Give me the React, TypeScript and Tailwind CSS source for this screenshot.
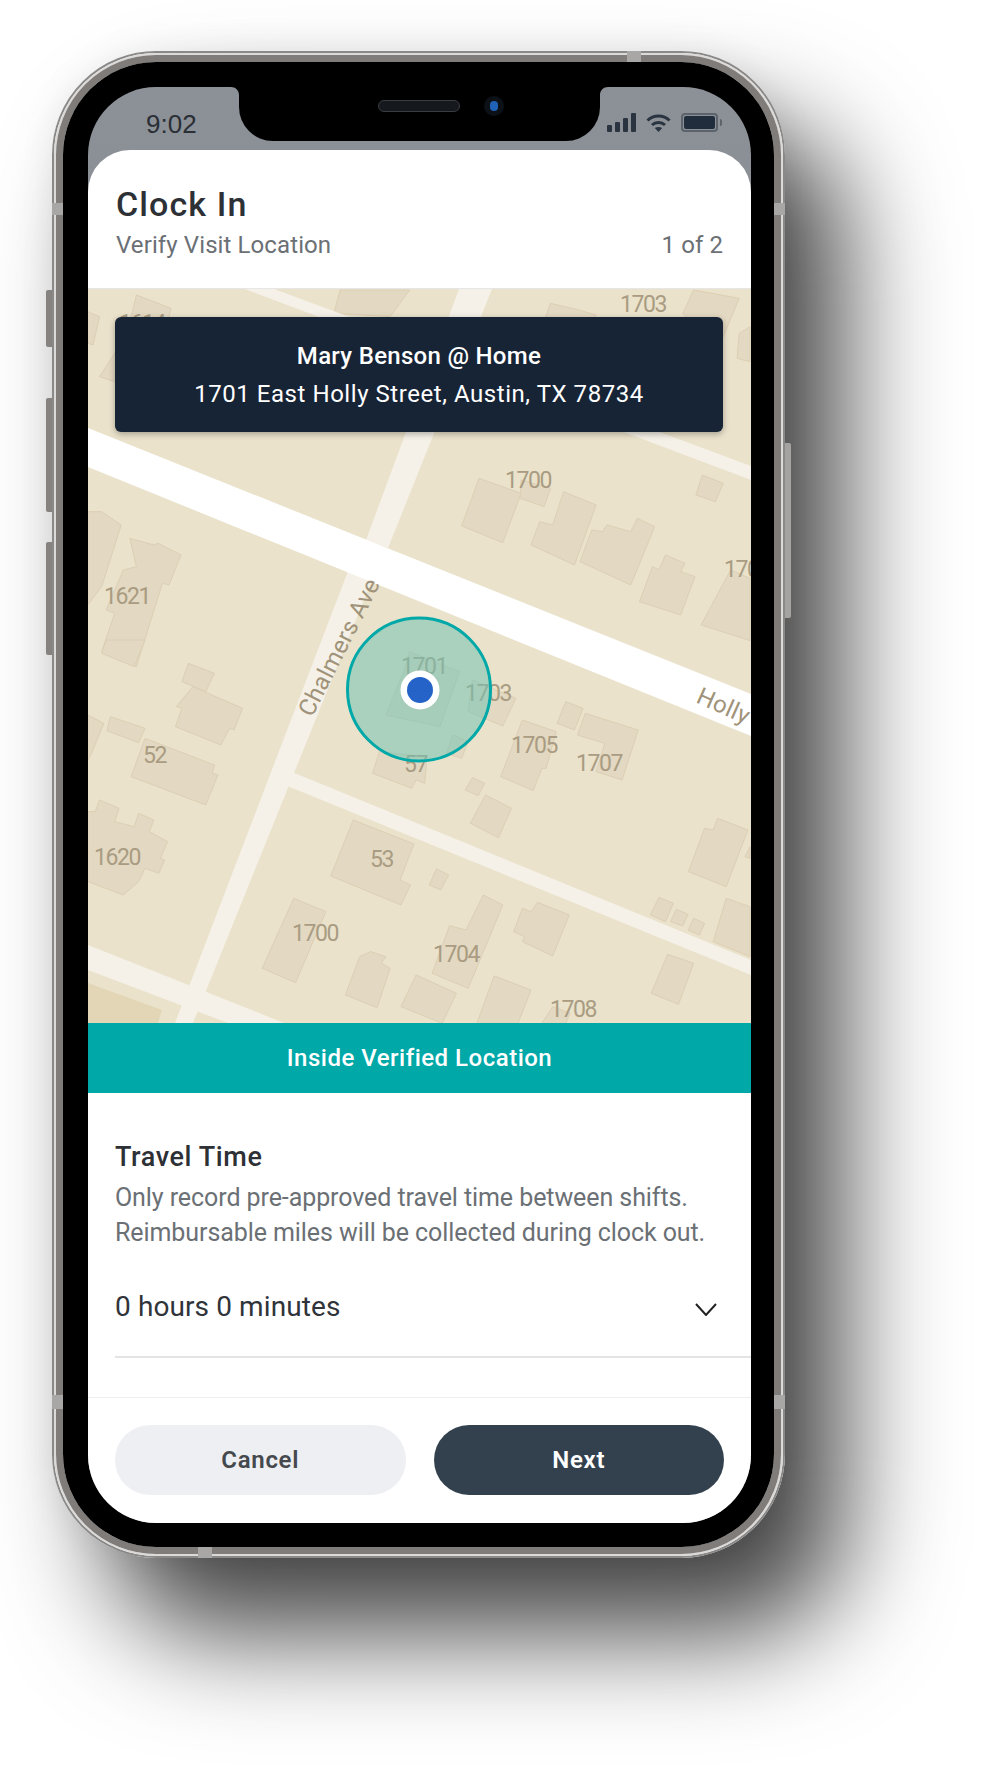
const upperBuildings = [
  "18,95 45,110 30,195 18,190",
  "130,45 210,85 160,340 45,290 100,180 120,100",
  "600,30 760,30 715,110 585,100",
  "1085,70 1150,90 1190,105 1160,200 1060,160",
  "1415,30 1520,55 1483,170 1420,150 1390,100",
  "1520,160 1545,140 1545,245 1515,235",
  "920,595 1017,640 975,788 880,738",
  "1017,600 1085,625 1070,680 1015,655",
  "1115,635 1190,675 1140,855 1040,795 1060,725 1090,735",
  "1215,735 1270,755 1285,715 1325,740 1270,915 1153,845 1180,750 1205,755",
  "1350,825 1395,850 1385,875 1418,890 1385,1005 1290,965 1320,860 1335,870",
  "1500,870 1545,895 1545,1082 1432,1035",
  "1435,585 1483,610 1465,665 1420,645",
  "18,695 50,695 95,735 50,920 18,975",
  "115,775 170,795 180,790 233,825 205,915 190,910 130,1160 50,1115 80,1000 60,990 100,870 130,860",
];

const lowerBuildings = [
  "60,0 150,0 125,80 50,40",
  "250,70 310,100 290,155 235,125",
  "260,140 375,205 355,270 345,265 325,315 220,260 235,205 222,200",
  "70,230 150,265 135,308 62,272",
  "18,225 55,250 25,345 18,360",
  "150,295 310,375 305,400 318,405 290,495 118,410",
  "45,480 90,505 80,545 125,560 135,520 170,540 160,575 202,605 185,655 195,660 182,700 150,685 135,725 100,765 18,725 18,515 35,515",
  "630,540 770,612 738,720 762,735 740,795 578,708",
  "822,687 850,705 832,750 805,735",
  "493,775 567,815 497,1028 420,985",
  "645,950 670,935 705,950 695,970 715,985 685,1103 612,1065",
  "930,765 975,795 895,1045 812,1000 852,857 890,870",
  "1055,787 1128,825 1090,948 1020,905 1025,890 1000,875 1020,805 1040,815",
  "775,1005 868,1060 835,1150 740,1100",
  "955,1008 1040,1050 1010,1150 915,1150",
  "1090,1100 1130,1120 1120,1150 1065,1150",
  "1355,943 1415,970 1380,1093 1317,1060",
  "1470,535 1540,570 1490,740 1403,695 1440,565 1460,570",
  "1545,620 1545,655 1533,650",
  "1490,775 1545,800 1545,950 1460,905",
  "1335,772 1368,790 1350,845 1315,825",
  "1375,808 1402,823 1390,858 1362,845",
  "1415,835 1440,850 1428,885 1402,870",
  "1020,240 1098,275 1075,385 1065,385 1045,452 970,410",
  "1120,185 1160,205 1140,270 1100,250",
  "1165,220 1287,270 1250,420 1190,395 1210,310 1147,285",
  "905,413 933,430 918,467 888,450",
  "935,465 995,505 965,593 900,550",
  "690,335 800,350 795,430 775,420 765,445 675,400",
  "905,120 1005,175 975,258 895,215",
  "760,35 875,95 830,260 705,225 745,100",
  "860,285 895,305 880,355 845,340",
];

const roads = [
  "245,289 274,289 751,466 751,480",
  "292,772 751,960 751,975 285,785",
  "88,945 284,1023 228,1023 88,970",
  "459,289 492,289 388,548 366,540",
  "350,566 372,580 193,1023 175,1023",
];

const labels = [
  { text: "1614", x: 119, y: 331 },
  { text: "1703", x: 620, y: 312 },
  { text: "1700", x: 505, y: 488 },
  { text: "170", x: 724, y: 577 },
  { text: "1621", x: 104, y: 604 },
  { text: "1701", x: 401, y: 674 },
  { text: "1703", x: 465, y: 701 },
  { text: "1705", x: 511, y: 753 },
  { text: "52", x: 143, y: 763 },
  { text: "1707", x: 576, y: 771 },
  { text: "57", x: 404, y: 772 },
  { text: "1620", x: 94, y: 865 },
  { text: "53", x: 370, y: 867 },
  { text: "1700", x: 292, y: 941 },
  { text: "1704", x: 433, y: 962 },
  { text: "1708", x: 550, y: 1017 },
];

function MapView() {
  return (
    <svg viewBox="88 289 663 734" className="block h-[734px] w-full bg-[#eae2cb]">
      <polygon points="88,983 162,1010 158,1023 88,1023" fill="#e2d6b6" />
      <g transform="translate(80 280) scale(0.4337 0.3333)" fill="#e3d8c1" stroke="#dccfb5">
        {upperBuildings.map((p) => (
          <polygon key={p} points={p} vectorEffect="non-scaling-stroke" />
        ))}
      </g>
      <g transform="translate(80 640) scale(0.4337 0.3333)" fill="#e3d8c1" stroke="#dccfb5">
        {lowerBuildings.map((p) => (
          <polygon key={p} points={p} vectorEffect="non-scaling-stroke" />
        ))}
      </g>
      {roads.map((p) => (
        <polygon key={p} points={p} fill="#f5f1e8" />
      ))}
      <polygon points="88,428 751,694 751,736 88,467" fill="#ffffff" />
      <g fontFamily="Roboto, sans-serif" fontSize="23" fill="#a99c82" letterSpacing="-1.4">
        {labels.map((l) => (
          <text key={l.x + l.text} x={l.x} y={l.y}>
            {l.text}
          </text>
        ))}
      </g>
      <g fontFamily="Roboto, sans-serif" fontSize="24" fill="#a0937a" letterSpacing="0.3">
        <text transform="translate(312 718) rotate(-63)">Chalmers Ave</text>
        <text transform="translate(695 702) rotate(24)">Holly</text>
      </g>
      <circle cx="419" cy="689.5" r="71.5" fill="#75c3b5" fillOpacity="0.55" stroke="#00a8a8" strokeWidth="3" />
      <circle cx="420" cy="690" r="19.5" fill="#ffffff" />
      <circle cx="420" cy="690" r="13" fill="#2563c8" />
    </svg>
  );
}

function StatusIcons() {
  return (
    <div className="flex items-center gap-[10px]">
      <div className="flex h-[19px] items-end gap-[3px]">
        <div className="h-[7px] w-[5px] rounded-[1px] bg-[#2a3440]" />
        <div className="h-[10px] w-[5px] rounded-[1px] bg-[#2a3440]" />
        <div className="h-[14px] w-[5px] rounded-[1px] bg-[#2a3440]" />
        <div className="h-[19px] w-[5px] rounded-[1px] bg-[#2a3440]" />
      </div>
      <svg width="25" height="19" viewBox="0 0 25 19" fill="none" stroke="#2a3440" strokeWidth="3">
        <path d="M1.5 7.5C7.5 1.5 17.5 1.5 23.5 7.5" />
        <path d="M6 12C9.5 8.7 15.5 8.7 19 12" />
        <path d="M12.5 19L8.8 15C11 13.6 14 13.6 16.2 15Z" fill="#2a3440" stroke="none" />
      </svg>
      <div className="flex items-center gap-[2px]">
        <div className="flex h-[19px] w-[37px] items-center justify-center rounded-[4px] border-2 border-[#5c636b]">
          <div className="h-[13px] w-[31px] rounded-[2px] bg-[#1f2d3d]" />
        </div>
        <div className="h-[7px] w-[2px] rounded-r-sm bg-[#5c636b]" />
      </div>
    </div>
  );
}

function Notch() {
  return (
    <div className="absolute top-0 left-[151px] h-[54px] w-[361px] rounded-b-[34px] bg-black">
      <svg width="8" height="8" viewBox="0 0 8 8" className="absolute top-0 -left-[8px]">
        <path d="M0 0H8V8C8 3.5 4.5 0 0 0Z" fill="#000000" />
      </svg>
      <svg width="8" height="8" viewBox="0 0 8 8" className="absolute top-0 -right-[8px]">
        <path d="M8 0H0V8C0 3.5 3.5 0 8 0Z" fill="#000000" />
      </svg>
      <div className="absolute top-[13px] left-[139px] h-[12px] w-[82px] rounded-full border border-[#3a3d42] bg-[#15181c]" />
      <div className="absolute top-[9px] left-[245px] flex h-[20px] w-[20px] items-center justify-center rounded-full bg-[#0c1118]">
        <div className="h-[10px] w-[8px] rounded-full bg-[#1f62b8]" />
      </div>
    </div>
  );
}

export default function App() {
  return (
    <div className="min-h-[1790px] overflow-hidden bg-white pt-[51px] pl-[52px] font-[Roboto,sans-serif]">
      <div className="relative h-[1507px] w-[733px] rounded-[104px] border-2 border-[#8b8987] shadow-[58px_76px_110px_rgba(0,0,0,0.73),0_0_36px_rgba(0,0,0,0.07)]">
        {/* side buttons */}
        <div className="absolute top-[237px] -left-[8px] h-[57px] w-[6px] rounded-l-[2px] bg-[#85827f]" />
        <div className="absolute top-[345px] -left-[8px] h-[114px] w-[6px] rounded-l-[2px] bg-[#85827f]" />
        <div className="absolute top-[489px] -left-[8px] h-[113px] w-[6px] rounded-l-[2px] bg-[#85827f]" />
        <div className="absolute top-[390px] -right-[8px] h-[175px] w-[6px] rounded-r-[2px] bg-[#a5a3a1]" />

        {/* antenna bands */}
        <div className="absolute -top-[2px] left-[573px] z-10 h-[11px] w-[14px] bg-[#a9a7a5]" />
        <div className="absolute -bottom-[2px] left-[144px] z-10 h-[11px] w-[14px] bg-[#a9a7a5]" />
        <div className="absolute top-[150px] -left-[2px] z-10 h-[12px] w-[11px] bg-[#a9a7a5]" />
        <div className="absolute top-[150px] -right-[2px] z-10 h-[12px] w-[11px] bg-[#a9a7a5]" />
        <div className="absolute top-[1342px] -left-[2px] z-10 h-[14px] w-[11px] bg-[#a9a7a5]" />
        <div className="absolute top-[1342px] -right-[2px] z-10 h-[14px] w-[11px] bg-[#a9a7a5]" />

        <div className="h-full rounded-[102px] border-2 border-[#dcdad8]">
          <div className="h-full rounded-[100px] border-[7px] border-[#7f7c7a]">
            <div className="h-full rounded-[93px] bg-black pt-[25px] pr-[23px] pb-[24px] pl-[25px]">
              <div className="relative flex h-full flex-col overflow-hidden rounded-[68px] bg-gradient-to-b from-[#8c9197] to-[#7a8087]">
                <div className="flex h-[63px] shrink-0 items-start justify-between pt-[25px] pr-[29px] pl-[58px]">
                  <span className="font-['Liberation_Sans',sans-serif] text-[26px] leading-[24px] text-[#2a2e35]">9:02</span>
                  <div className="pt-[1px]">
                    <StatusIcons />
                  </div>
                </div>
                <Notch />

                <div className="flex min-h-0 flex-1 flex-col overflow-hidden rounded-t-[42px] bg-white">
                  <header className="flex h-[139px] shrink-0 flex-col border-b border-[#e6e6e6] px-[28px] pt-[34px]">
                    <h1 className="text-[34px] leading-[40px] font-medium tracking-[1.1px] text-[#2d3035]">Clock In</h1>
                    <div className="mt-[5px] flex items-center justify-between text-[24px] leading-[32px] tracking-[0.1px] text-[#6b7075]">
                      <span>Verify Visit Location</span>
                      <span>1 of 2</span>
                    </div>
                  </header>

                  <div className="relative shrink-0">
                    <MapView />
                    <div className="absolute top-[28px] right-[28px] left-[27px] flex h-[115px] flex-col items-center justify-center rounded-[6px] bg-[#172436] text-white shadow-[0_2px_6px_rgba(0,0,0,0.3)]">
                      <div className="text-[24px] leading-[38px] font-medium tracking-[0.3px]">Mary Benson @ Home</div>
                      <div className="text-[24px] leading-[38px] tracking-[0.55px]">1701 East Holly Street, Austin, TX 78734</div>
                    </div>
                  </div>

                  <div className="flex h-[70px] shrink-0 items-center justify-center bg-[#00a8a8] text-[24px] font-medium tracking-[0.5px] text-white">
                    Inside Verified Location
                  </div>

                  <section className="flex min-h-0 flex-1 flex-col pt-[48px] pl-[27px]">
                    <h2 className="text-[27px] leading-[32px] font-medium tracking-[0.6px] text-[#2d3035]">Travel Time</h2>
                    <p className="mt-[7px] pr-[20px] text-[25px] leading-[35px] tracking-[-0.08px] text-[#6b7075]">
                      Only record pre-approved travel time between shifts.
                      <br />
                      Reimbursable miles will be collected during clock out.
                    </p>
                    <div className="mt-[41px] flex items-center justify-between border-b-2 border-[#e2e4e6] pr-[34px] pb-[33px]">
                      <span className="text-[28px] leading-[32px] tracking-[0.1px] text-[#30343a]">0 hours 0 minutes</span>
                      <svg width="22" height="13" viewBox="0 0 22 13" fill="none" stroke="#222222" strokeWidth="2" className="mt-[4px]">
                        <path d="M1 1L11 12L21 1" />
                      </svg>
                    </div>
                  </section>

                  <footer className="flex shrink-0 gap-[28px] border-t border-[#eeeeee] px-[27px] pt-[27px] pb-[28px]">
                    <button className="h-[70px] flex-1 rounded-full bg-[#eeeff3] text-[24px] font-semibold tracking-[0.7px] text-[#45494e]">Cancel</button>
                    <button className="h-[70px] flex-1 rounded-full bg-[#33414f] text-[24px] font-semibold tracking-[0.7px] text-white">Next</button>
                  </footer>
                </div>
              </div>
            </div>
          </div>
        </div>
      </div>
    </div>
  );
}
